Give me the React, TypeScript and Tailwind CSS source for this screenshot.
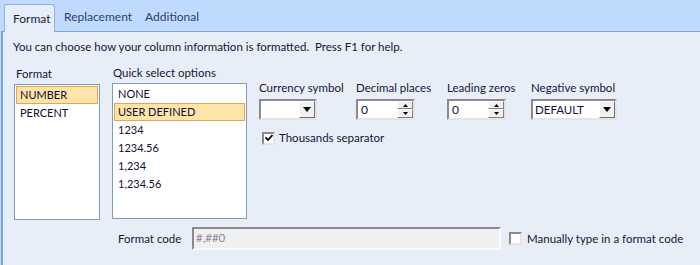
import React from 'react';

const font = { fontFamily: 'Lato, "Noto Sans", sans-serif' };

function Arrow({ dir = 'down', size = 'lg' }: { dir?: 'up' | 'down'; size?: 'lg' | 'sm' }) {
  if (size === 'sm') {
    return (
      <svg width="5" height="3" viewBox="0 0 5 3">
        {dir === 'up' ? <path d="M0 3 L2.5 0 L5 3 Z" fill="#000" /> : <path d="M0 0 L5 0 L2.5 3 Z" fill="#000" />}
      </svg>
    );
  }
  return (
    <svg width="8" height="5" viewBox="0 0 8 5">
      <path d="M0 0 L8 0 L4 5 Z" fill="#000" />
    </svg>
  );
}

function Dropdown({ value, width }: { value: string; width: string }) {
  return (
    <div className={`${width} h-[21px] flex bg-white border-2 border-t-[#8a8a8a] border-l-[#8a8a8a] border-r-[#e4e4e4] border-b-[#e4e4e4]`}>
      <div className="flex-1 pl-[2px] text-[11.5px] leading-[17px] text-[#101040]">{value}</div>
      <div className="w-[16px] h-[17px] bg-[#f0f0f0] border border-t-white border-l-white border-r-[#707070] border-b-[#707070] flex items-center justify-center">
        <Arrow />
      </div>
    </div>
  );
}

function Spinner({ value }: { value: string }) {
  return (
    <div className="w-[59px] h-[21px] flex bg-white border-2 border-t-[#8a8a8a] border-l-[#8a8a8a] border-r-[#e4e4e4] border-b-[#e4e4e4]">
      <div className="flex-1 pl-[3px] text-[12px] leading-[17px] text-[#101040]">{value}</div>
      <div className="w-[16px] flex flex-col">
        <div className="h-[8px] bg-[#f0f0f0] border border-t-white border-l-white border-r-[#808080] border-b-[#808080] flex items-center justify-center">
          <Arrow dir="up" size="sm" />
        </div>
        <div className="h-[9px] bg-[#f0f0f0] border border-t-white border-l-white border-r-[#808080] border-b-[#808080] flex items-center justify-center">
          <Arrow dir="down" size="sm" />
        </div>
      </div>
    </div>
  );
}

function Checkbox({ checked }: { checked?: boolean }) {
  return (
    <div className="w-[13px] h-[13px] shrink-0 bg-white border-2 border-t-[#8a8a8a] border-l-[#8a8a8a] border-r-[#e4e4e4] border-b-[#e4e4e4] flex items-center justify-center">
      {checked && (
        <svg width="8" height="8" viewBox="0 0 8 8">
          <path d="M0.5 3.5 L3 6 L7.5 1" stroke="#000" strokeWidth="1.8" fill="none" />
        </svg>
      )}
    </div>
  );
}

function ListBox({ items, selected, width }: { items: string[]; selected: string; width: string }) {
  return (
    <div className={`${width} h-[136px] bg-white border border-[#7f9db9] p-px`}>
      {items.map((it) => (
        <div
          key={it}
          className={`h-[18px] pl-[3px] text-[11px] leading-[16px] text-[#101030] ${
            it === selected ? 'bg-[#fde4a8] border border-[#f0a050]' : 'border border-transparent'
          }`}
        >
          {it}
        </div>
      ))}
    </div>
  );
}

export default function App() {
  return (
    <div className="w-[700px] h-[265px] flex flex-col bg-[#c0dafd] overflow-hidden whitespace-nowrap" style={font}>
      <div className="h-[31px] flex items-end pl-[4px] text-[12px] shrink-0">
        <div className="h-[28px] w-[51px] pl-[8px] flex items-center bg-[#e7eef9] border border-b-0 border-[#8fb2dc] rounded-t-[3px] -mb-px relative z-10 text-[#1a1a40]">
          Format
        </div>
        <div className="h-[28px] pl-[9px] pr-[13px] flex items-center text-[#2a3a78]">Replacement</div>
        <div className="h-[28px] flex items-center text-[#2a3a78]">Additional</div>
      </div>
      <div className="flex-1 bg-[#e8eef8] border-t border-l-2 border-[#7fa4d6] ml-px pl-[10px] pt-[7px] text-[11.5px] text-[#14143c]">
        <div className="whitespace-pre leading-[16px]">You can choose how your column information is formatted.  Press F1 for help.</div>
        <div className="flex mt-[10px]">
          <div className="flex flex-col ml-px">
            <div className="pl-[2px] h-[16px] leading-[16px] mt-px mb-[2px]">Format</div>
            <ListBox items={['NUMBER', 'PERCENT']} selected="NUMBER" width="w-[86px]" />
          </div>
          <div className="flex flex-col ml-[12px]">
            <div className="pl-px h-[16px] leading-[16px] mb-[2px]">Quick select options</div>
            <ListBox
              items={['NONE', 'USER DEFINED', '1234', '1234.56', '1,234', '1,234.56']}
              selected="USER DEFINED"
              width="w-[135px]"
            />
          </div>
          <div className="flex flex-col ml-[12px] mt-[15px]">
            <div className="flex">
              <div className="flex flex-col w-[97px]">
                <div className="h-[16px] leading-[16px] mb-[3px]">Currency symbol</div>
                <Dropdown value="" width="w-[58px]" />
              </div>
              <div className="flex flex-col w-[91px]">
                <div className="h-[16px] leading-[16px] mb-[3px]">Decimal places</div>
                <Spinner value="0" />
              </div>
              <div className="flex flex-col w-[84px]">
                <div className="h-[16px] leading-[16px] mb-[3px]">Leading zeros</div>
                <Spinner value="0" />
              </div>
              <div className="flex flex-col">
                <div className="h-[16px] leading-[16px] mb-[3px]">Negative symbol</div>
                <Dropdown value="DEFAULT" width="w-[86px]" />
              </div>
            </div>
            <div className="flex items-center mt-[10px] ml-[3px]">
              <Checkbox checked />
              <span className="ml-[4px] leading-[16px]">Thousands separator</span>
            </div>
          </div>
        </div>
        <div className="flex items-center mt-[7px] ml-[105px]">
          <span className="w-[74px] leading-[16px]">Format code</span>
          <div className="w-[309px] h-[23px] bg-[#f0f0f0] border-2 border-t-[#8a8a8a] border-l-[#8a8a8a] border-r-[#fafafa] border-b-[#fafafa] pl-[2px] leading-[18px] text-[#8a8a9a]">
            #,##0
          </div>
          <div className="ml-[8px]">
            <Checkbox />
          </div>
          <span className="ml-[5px] leading-[16px]">Manually type in a format code</span>
        </div>
      </div>
    </div>
  );
}
